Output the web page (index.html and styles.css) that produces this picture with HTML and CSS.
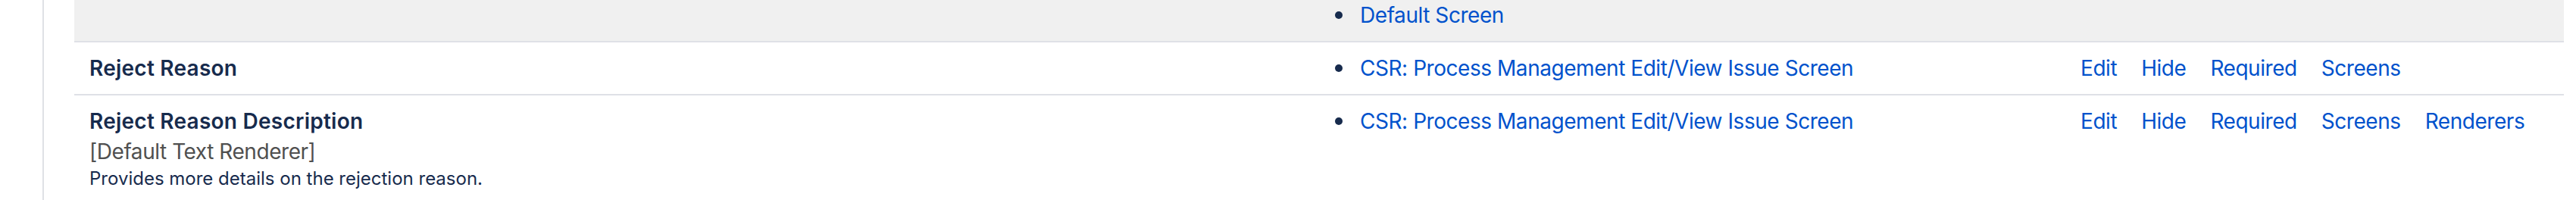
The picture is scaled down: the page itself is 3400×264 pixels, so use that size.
FILE: index.html
```html
<!DOCTYPE html>
<html lang="en">
<head>
<meta charset="utf-8">
<title>Fields</title>
<link rel="stylesheet" href="styles.css">
</head>
<body>
<div class="page">
  <div class="fields">
    <div class="row row-alt row-cut">
      <div class="cell name"></div>
      <div class="cell screens">
        <ul class="screen-list">
          <li><a href="#">Default Screen</a></li>
        </ul>
      </div>
      <div class="cell actions"></div>
    </div>
    <div class="row">
      <div class="cell name">
        <div class="field-title">Reject Reason</div>
      </div>
      <div class="cell screens">
        <ul class="screen-list">
          <li><a href="#">CSR: Process Management Edit/View Issue Screen</a></li>
        </ul>
      </div>
      <div class="cell actions">
        <a href="#">Edit</a><a href="#">Hide</a><a href="#">Required</a><a href="#">Screens</a>
      </div>
    </div>
    <div class="row">
      <div class="cell name">
        <div class="field-title">Reject Reason Description</div>
        <div class="renderer">[Default Text Renderer]</div>
        <div class="desc">Provides more details on the rejection reason.</div>
      </div>
      <div class="cell screens">
        <ul class="screen-list">
          <li><a href="#">CSR: Process Management Edit/View Issue Screen</a></li>
        </ul>
      </div>
      <div class="cell actions">
        <a href="#">Edit</a><a href="#">Hide</a><a href="#">Required</a><a href="#">Screens</a><a href="#">Renderers</a>
      </div>
    </div>
  </div>
</div>
</body>
</html>
```

FILE: styles.css
```css
html, body {
  margin: 0;
  padding: 0;
  background: #ffffff;
}
body {
  font-family: "Inter", "Liberation Sans", sans-serif;
  font-size: 28px;
  line-height: 40px;
  color: #172b4d;
  letter-spacing: -0.45px;
}
.page {
  margin-left: 56px;
  border-left: 2px solid #dfe1e6;
  padding-left: 40px;
  padding-right: 16px;
  min-height: 264px;
}
.fields {
  display: flex;
  flex-direction: column;
}
.row {
  display: grid;
  grid-template-columns: 1624px 1004px 1fr;
  border-bottom: 2px solid #dfe1e6;
}
.row:last-child {
  border-bottom: none;
}
.row-alt {
  background: #f0f0f0;
}
.cell {
  padding: 14px 20px;
}
.row-cut .cell {
  padding-top: 0;
}
.field-title {
  font-weight: 600;
  letter-spacing: 0.25px;
}
.renderer {
  color: #505050;
}
.desc {
  font-size: 24px;
  line-height: 32px;
  letter-spacing: 0;
}
a {
  color: #0052cc;
  text-decoration: none;
}
.screen-list {
  list-style: none;
  margin: 0;
  padding: 0;
}
.screen-list li {
  display: flex;
  align-items: center;
}
.screen-list li::before {
  content: "";
  width: 10px;
  height: 10px;
  border-radius: 50%;
  background: #172b4d;
  margin-left: 20px;
  margin-right: 23px;
  flex: none;
}
.actions {
  display: flex;
  gap: 32px;
  align-items: flex-start;
}
```
